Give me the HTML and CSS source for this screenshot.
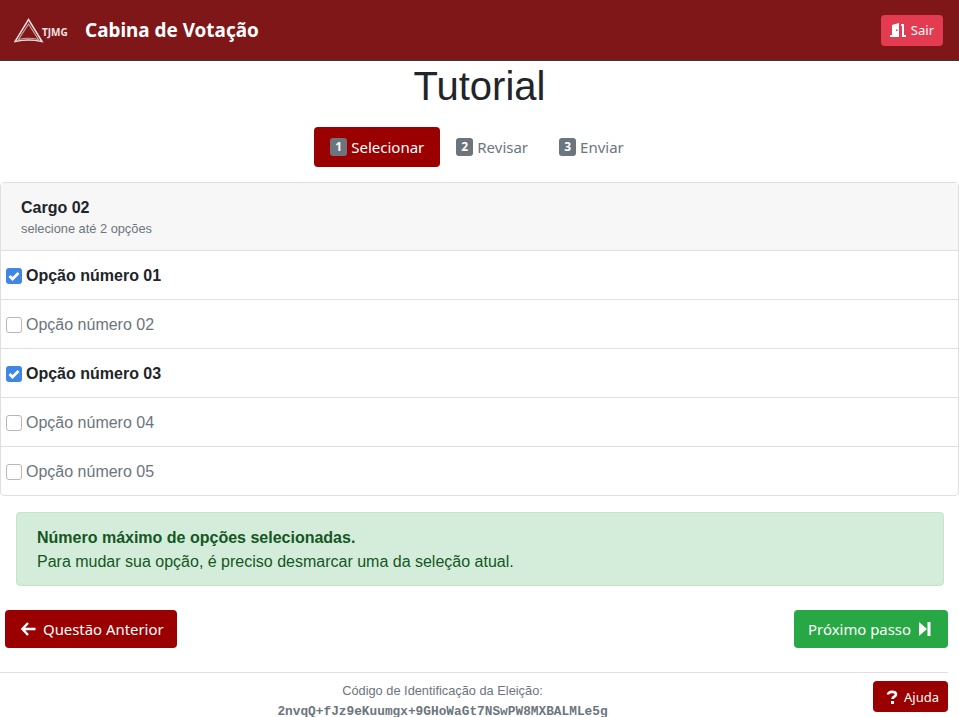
FILE: index.html
```html
<!DOCTYPE html>
<html lang="pt-BR">
<head>
    <meta charset="UTF-8">
    <meta name="viewport" content="width=device-width, initial-scale=1.0">
    <title>Cabina de Votação</title>
    <link rel="stylesheet" href="styles.css">
</head>
<body>
    <header class="topbar">
        <div class="brand">
            <svg class="logo" width="32" height="26" viewBox="0 0 32 26">
                <path d="M14.5 1.5 L28 23.5 Q14.5 20.5 1 23.5 Z" fill="none" stroke="#eadcdc" stroke-width="1.5"/>
                <path d="M14.5 6 L24.5 21.5 Q14.5 19 4.5 21.5 Z" fill="none" stroke="#c9a3a3" stroke-width="1.2"/>
            </svg>
            <span class="logo-text">TJMG</span>
            <span class="brand-title">Cabina de Votação</span>
        </div>
        <button class="btn btn-exit">
            <svg width="16" height="14" viewBox="0 0 16 14">
                <path d="M0 14 V12 H2 V2 L9 0 V14 Z M11 1 H14 V12 H16 V14 H12 V3 H11 Z" fill="#fff"/>
                <rect x="6" y="6.5" width="1.5" height="1.5" fill="#e33c50"/>
            </svg>
            Sair
        </button>
    </header>

    <h1 class="page-title">Tutorial</h1>

    <nav class="steps">
        <div class="step active"><span class="step-num">1</span> Selecionar</div>
        <div class="step"><span class="step-num">2</span> Revisar</div>
        <div class="step"><span class="step-num">3</span> Enviar</div>
    </nav>

    <section class="card">
        <div class="card-header">
            <div class="card-title">Cargo 02</div>
            <div class="card-sub">selecione até 2 opções</div>
        </div>
        <div class="option selected">
            <span class="check on"><svg width="12" height="10" viewBox="0 0 12 10"><path d="M1.5 5 L4.5 8 L10.5 2" fill="none" stroke="#fff" stroke-width="2.8"/></svg></span>
            Opção número 01
        </div>
        <div class="option"><span class="check"></span>Opção número 02</div>
        <div class="option selected">
            <span class="check on"><svg width="12" height="10" viewBox="0 0 12 10"><path d="M1.5 5 L4.5 8 L10.5 2" fill="none" stroke="#fff" stroke-width="2.8"/></svg></span>
            Opção número 03
        </div>
        <div class="option"><span class="check"></span>Opção número 04</div>
        <div class="option"><span class="check"></span>Opção número 05</div>
    </section>

    <div class="alert">
        <strong>Número máximo de opções selecionadas.</strong><br>
        Para mudar sua opção, é preciso desmarcar uma da seleção atual.
    </div>

    <div class="actions">
        <button class="btn btn-dark-red btn-prev">
            <svg width="15" height="14" viewBox="0 0 15 14"><path d="M7 1 L1.5 7 L7 13 M2 7 H14.5" fill="none" stroke="#fff" stroke-width="2.4"/></svg>
            Questão Anterior
        </button>
        <button class="btn btn-green btn-next">
            Próximo passo
            <svg width="12" height="14" viewBox="0 0 12 14"><path d="M0 0 L8 7 L0 14 Z" fill="#fff"/><rect x="8.5" y="0" width="3" height="14" fill="#fff"/></svg>
        </button>
    </div>

    <footer class="footer">
        <div class="footer-text">
            <div class="footer-label">Código de Identificação da Eleição:</div>
            <code class="footer-code">2nvqQ+fJz9eKuumgx+9GHoWaGt7NSwPW8MXBALMLe5g</code>
        </div>
        <button class="btn btn-dark-red btn-help">
            <svg width="12" height="14" viewBox="0 0 12 14"><path d="M2 4.5 C2 1 10 1 10 4.5 C10 7 6.5 6.5 6.5 9" fill="none" stroke="#fff" stroke-width="2.6"/><rect x="5" y="11" width="3" height="3" fill="#fff"/></svg>
            Ajuda
        </button>
    </footer>
</body>
</html>
```

FILE: styles.css
```css
html, body {
    margin: 0;
    padding: 0;
    height: 717px;
    overflow: hidden;
}
body {
    font-family: "Liberation Sans", Arial, sans-serif;
    font-size: 16px;
    line-height: 24px;
    color: #212529;
    background-color: #fff;
}
.topbar {
    height: 60px;
    display: flex;
    justify-content: space-between;
    align-items: center;
    padding: 0 16px 0 14px;
    background-color: #7f1718;
    border-bottom: 1px solid #343a40;
}
.brand {
    display: flex;
    align-items: center;
}
.logo {
    margin-top: 2px;
}
.logo-text {
    width: 43px;
    margin-left: -4px;
    margin-top: 4px;
    font-family: "Noto Sans", sans-serif;
    font-size: 10px;
    font-weight: 700;
    color: #f0e4e4;
}
.brand-title {
    font-family: "Noto Sans", sans-serif;
    font-size: 18.9px;
    font-weight: 700;
    color: #fff;
}
.btn {
    display: inline-flex;
    align-items: center;
    border: none;
    border-radius: 4px;
    font-family: "Noto Sans", sans-serif;
    color: #fff;
}
.btn-exit {
    height: 31px;
    padding: 0 9px;
    gap: 5px;
    font-size: 13px;
    background-color: #e33c50;
}
.page-title {
    margin: 0;
    height: 66px;
    font-size: 40px;
    line-height: 50px;
    font-weight: 400;
    text-align: center;
}
.steps {
    display: flex;
    justify-content: center;
    height: 40px;
    margin-bottom: 15px;
    padding-right: 5px;
    font-family: "Noto Sans", sans-serif;
    font-size: 15px;
    color: #6c757d;
}
.step {
    display: flex;
    align-items: center;
    gap: 4px;
    padding: 0 16px;
    border-radius: 4px;
}
.step:last-child {
    padding-left: 15px;
}
.step.active {
    background-color: #9b0000;
    color: #fff;
}
.step-num {
    width: 17px;
    height: 18px;
    border-radius: 3px;
    background-color: #6c757d;
    color: #fff;
    font-size: 12px;
    font-weight: 700;
    line-height: 18px;
    text-align: center;
}
.card {
    border: 1px solid #dfdfdf;
    border-radius: 4px;
}
.card-header {
    height: 68px;
    padding: 13px 20px 0;
    box-sizing: border-box;
    background-color: #f7f7f7;
    border-bottom: 1px solid #dfdfdf;
}
.card-title {
    font-weight: 700;
}
.card-sub {
    font-size: 12.8px;
    line-height: 18px;
    color: #6c757d;
}
.option {
    height: 47px;
    padding-top: 1px;
    padding-left: 5px;
    display: flex;
    align-items: center;
    gap: 4px;
    color: #6c757d;
    border-bottom: 1px solid #dfdfdf;
}
.option:last-child {
    border-bottom: none;
}
.option.selected {
    font-weight: 700;
    color: #212529;
}
.check {
    width: 16px;
    height: 16px;
    display: flex;
    align-items: center;
    justify-content: center;
    box-sizing: border-box;
    border: 1px solid #bcb6b2;
    border-radius: 3px;
    background-color: #fff;
}
.check.on {
    border: none;
    background-color: #3f86e6;
}
.alert {
    margin: 16px 15px 0 16px;
    padding: 13px 20px 0;
    height: 74px;
    box-sizing: border-box;
    background-color: #d4edda;
    border: 1px solid #c3e6cb;
    border-radius: 4px;
    color: #155724;
}
.actions {
    display: flex;
    justify-content: space-between;
    margin: 24px 11px 0 5px;
}
.btn-prev,
.btn-next {
    height: 38px;
    font-size: 14.9px;
}
.btn-prev {
    padding: 0 13px 0 16px;
    gap: 7px;
}
.btn-next {
    padding: 0 17px 0 14px;
    gap: 8px;
}
.btn-dark-red {
    background-color: #9b0000;
}
.btn-green {
    background-color: #28a745;
}
.footer {
    display: flex;
    margin: 24px 11px 0 0;
    padding-top: 8px;
    border-top: 1px solid #dfdfe3;
    text-align: center;
    color: #6c757d;
}
.footer-text {
    flex: 1;
    padding-left: 12px;
}
.footer-label {
    font-size: 12.8px;
    line-height: 20px;
}
.footer-code {
    display: block;
    margin-top: 1px;
    font-family: "Liberation Mono", monospace;
    font-size: 12.8px;
    font-weight: 700;
    line-height: 20px;
    white-space: nowrap;
}
.btn-help {
    height: 31px;
    padding: 0 9px 0 13px;
    gap: 6px;
    font-size: 13px;
}
```
